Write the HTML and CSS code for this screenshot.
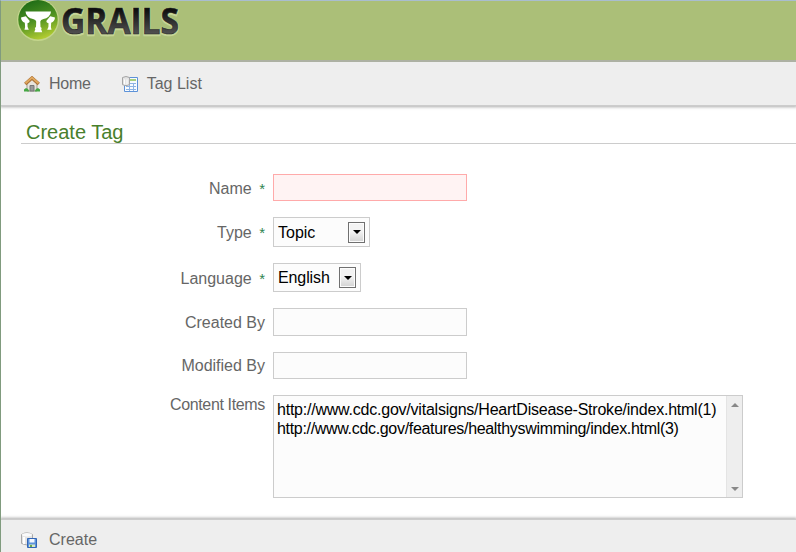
FILE: index.html
```
<!DOCTYPE html>
<html lang="en">
<head>
<meta charset="utf-8">
<title>Create Tag</title>
<link rel="stylesheet" href="styles.css">
</head>
<body>
<div class="page">
  <header class="banner">
    <svg class="logo" width="170" height="46" viewBox="0 0 170 46">
      <defs>
        <linearGradient id="ball" x1=".3" y1="0" x2=".65" y2="1"><stop offset="0" stop-color="#1d6b16"/><stop offset=".5" stop-color="#4e9122"/><stop offset="1" stop-color="#b9d032"/></linearGradient>
        <linearGradient id="ink" x1="0" y1="0" x2="0" y2="1"><stop offset=".25" stop-color="#0b0b0b"/><stop offset=".8" stop-color="#555"/></linearGradient>
      </defs>
      <circle cx="22" cy="19" r="21" fill="#c3d58c"/>
      <circle cx="22" cy="18.800" r="19.700" fill="url(#ball)"/>
      <g fill="#fff">
        <path d="M9.500 10.500h25.500q0 3-2.500 5.200-2 1.800-5 2.300-3 .6-3.200 2.500l.2 5.500 1.200 1-.5 1.300 1 3h-7.900l1-3-.5-1.300 1.200-1 .2-5.500q-.2-1.900-3.200-2.500-3-.5-5-2.300-2.500-2.200-2.500-5.200z"/>
        <path d="M5 16.500l4.800-1.200 3.900 4.800q0 1.900-2.200 2.200l.1 3.700 1.200 2.700h-4.300l.6-2.700-.3-4.200q-3.600-1.300-3.800-5.300zM39 16.500l-4.800-1.200-3.900 4.800q0 1.900 2.200 2.200l-.1 3.700-1.200 2.700h4.300l-.6-2.700.3-4.200q3.600-1.300 3.800-5.300z"/>
      </g>
      <text class="logo-halo" x="45" y="33.500" textLength="118" lengthAdjust="spacingAndGlyphs">GRAILS</text>
      <text class="logo-text" x="45" y="33" textLength="118" lengthAdjust="spacingAndGlyphs">GRAILS</text>
    </svg>
  </header>
  <nav class="nav">
    <a class="nav-link">
      <svg width="16" height="16" viewBox="0 0 16 16"><path d="M3 8l5-5 5 5v7H3z" fill="#e8e4dc" stroke="#a29b8d"/><path d="M6 9.500h4V15H6z" fill="#999" stroke="#777"/><path d="M1.200 8L8 2l6.800 6" fill="none" stroke="#ad7337" stroke-width="3.400"/><path d="M1.500 7.200L8 1.600l6.500 5.600" fill="none" stroke="#e0a85f" stroke-width="1.800"/><path d="M0 15.500v-2l2-1.500 2 1 1.500 2.500zM16 15.500v-2L14 12l-2 1-1.500 2.500z" fill="#45a744"/></svg>
      <span class="tight">Home</span>
    </a>
    <a class="nav-link">
      <svg width="16" height="16" viewBox="0 0 16 16"><path d="M2.500 1.500h13v14h-13z" fill="#f7fbff" stroke="#5d92d8"/><path d="M8 4h6" stroke="#8cc152" stroke-width="1.500"/><path d="M4 7.500h10M4 10.500h10M4 13.500h10M7.500 7v8M11.500 7v8" stroke="#8eb4e4" fill="none"/><path d="M.5 1.500Q4-.5 7.500 1.500v7.200Q4 10.700.5 8.700z" fill="#e4e4e4" stroke="#a5a5a5"/><path d="M2.500 3.500v5M5 3.500v5" stroke="#fff"/></svg>
      <span>Tag List</span>
    </a>
  </nav>
  <main class="content">
    <h1>Create Tag</h1>
    <form class="form">
      <div class="row name"><label>Name <i>*</i></label><div class="field wide invalid"></div></div>
      <div class="row type"><label>Type <i>*</i></label><div class="field select"><span>Topic</span><b class="drop"></b></div></div>
      <div class="row language"><label>Language <i>*</i></label><div class="field select short"><span>English</span><b class="drop"></b></div></div>
      <div class="row created"><label>Created By</label><div class="field wide"></div></div>
      <div class="row modified"><label>Modified By</label><div class="field wide"></div></div>
      <div class="row items"><label>Content Items</label>
        <div class="field list">
          <div class="options"><div>http://www.cdc.gov/vitalsigns/HeartDisease-Stroke/index.html(1)</div><div class="condensed">http://www.cdc.gov/features/healthyswimming/index.html(3)</div></div>
          <div class="scroll"><b class="up"></b><b class="down"></b></div>
        </div>
      </div>
    </form>
  </main>
  <footer class="buttons">
    <svg width="16" height="16" viewBox="0 0 16 16"><path d="M.5 2.500Q5.500-.8 11.500 2.500v9Q6 14.500.5 11.500z" fill="#e4e4e4" stroke="#aaa"/><ellipse cx="6" cy="2.700" rx="5" ry="1.700" fill="#fafafa"/><path d="M3 5v7" stroke="#fff" stroke-width="2"/><path d="M6.500 6.500h9v9h-9z" fill="#5d93dc" stroke="#3266b5"/><path d="M8.500 7h5v3.500h-5z" fill="#f4f8ff"/><path d="M8 12.500h6V15H8z" fill="#d9e9c3"/><path d="M9 13h2v2H9z" fill="#6aa84f"/></svg>
    <span>Create</span>
  </footer>
</div>
</body>
</html>
```
FILE: styles.css
```
* { box-sizing: border-box; }
body {
  margin: 0;
  overflow: hidden;
  background: #fff;
  color: #666;
  font: 16px/18px "Liberation Sans", Arial, sans-serif;
}
.page {
  height: 552px;
  border-top: 1px solid #a9bdd0;
  border-left: 1px solid #809b7e;
  display: flex;
  flex-direction: column;
}
.banner {
  height: 61px;
  flex: none;
  background: #abbf78;
  border-bottom: 2px solid #adb1a3;
  padding-left: 15px;
}
.logo { display: block; overflow: visible; }
.logo-text, .logo-halo { font: bold 36px "Open Sans", sans-serif; }
.logo-text { fill: url(#ink); stroke: #222; stroke-width: .6px; }
.logo-halo { fill: #c9d99c; stroke: #c5d597; stroke-width: 2.500px; }
.nav {
  height: 44px;
  flex: none;
  display: flex;
  align-items: center;
  gap: 31px;
  padding-left: 23px;
  background: #eee;
  border-bottom: 1px solid #ccc;
  box-shadow: 0 0 3px 1px #aaa;
  clip-path: inset(0 0 -5px 0);
}
.nav-link { display: flex; align-items: center; gap: 9px; }
.nav-link svg { display: block; }
.tight { letter-spacing: -.25px; }
.content { height: 413px; flex: none; padding: 14px 0 0 20px; }
h1 {
  margin: 0;
  height: 24px;
  padding-left: 5px;
  border-bottom: 1px solid #ccc;
  color: #48802c;
  font-size: 20px;
  font-weight: normal;
  line-height: 24px;
}
.form { padding-top: 30px; }
.row { display: flex; align-items: center; gap: 8px; }
.row label { width: 244px; padding-top: 2px; text-align: right; }
.row i {
  display: inline-block;
  margin-left: 3px;
  color: #2f8550;
  font-size: 15px;
  font-style: normal;
}
.field { background: #fcfcfc; border: 1px solid #ccc; color: #000; }
.wide { width: 194px; height: 28px; }
.invalid { height: 27px; background: #fff3f3; border-color: #ffaaaa; }
.name, .type, .language, .created, .modified { margin-bottom: 16px; }
.modified .field { height: 27px; }
.modified label { padding-top: 0; }
.select {
  width: 97px;
  height: 30px;
  display: flex;
  align-items: center;
  justify-content: space-between;
  padding: 0 4px;
}
.type span { padding-top: 2px; }
.short { width: 88px; height: 29px; letter-spacing: -.1px; }
.drop {
  width: 17px;
  height: 21px;
  display: flex;
  align-items: center;
  justify-content: center;
  border: 1px solid #707070;
  background: linear-gradient(#f3f3f3 45%, #d2d2d2);
  box-shadow: inset 0 0 0 1px #fcfcfc;
}
.drop::after {
  content: "";
  border: 4px solid transparent;
  border-top-color: #000;
  border-bottom: 0;
}
.items { align-items: flex-start; }
.items label { padding-top: 1px; letter-spacing: -.35px; }
.list { width: 470px; height: 103px; display: flex; justify-content: space-between; }
.options {
  padding: 4px 0 0 3px;
  line-height: 19px;
  letter-spacing: -.225px;
  white-space: nowrap;
}
.condensed { letter-spacing: -.32px; }
.scroll {
  width: 16px;
  flex: none;
  display: flex;
  flex-direction: column;
  align-items: center;
  justify-content: space-between;
  padding: 7px 0 6px;
  background: #eee;
  border-left: 1px solid #e4e4e4;
}
.up, .down { border: 4px solid transparent; }
.up { border-top: 0; border-bottom-color: #888; }
.down { border-bottom: 0; border-top-color: #888; }
.buttons {
  flex: 1;
  display: flex;
  align-items: flex-start;
  gap: 12px;
  padding: 11px 0 0 20px;
  background: #eee;
  border-top: 1px solid #ccc;
  box-shadow: 0 0 3px 1px #aaa;
  clip-path: inset(-5px 0 0 0);
}
.buttons svg { margin-top: 1px; }
```
